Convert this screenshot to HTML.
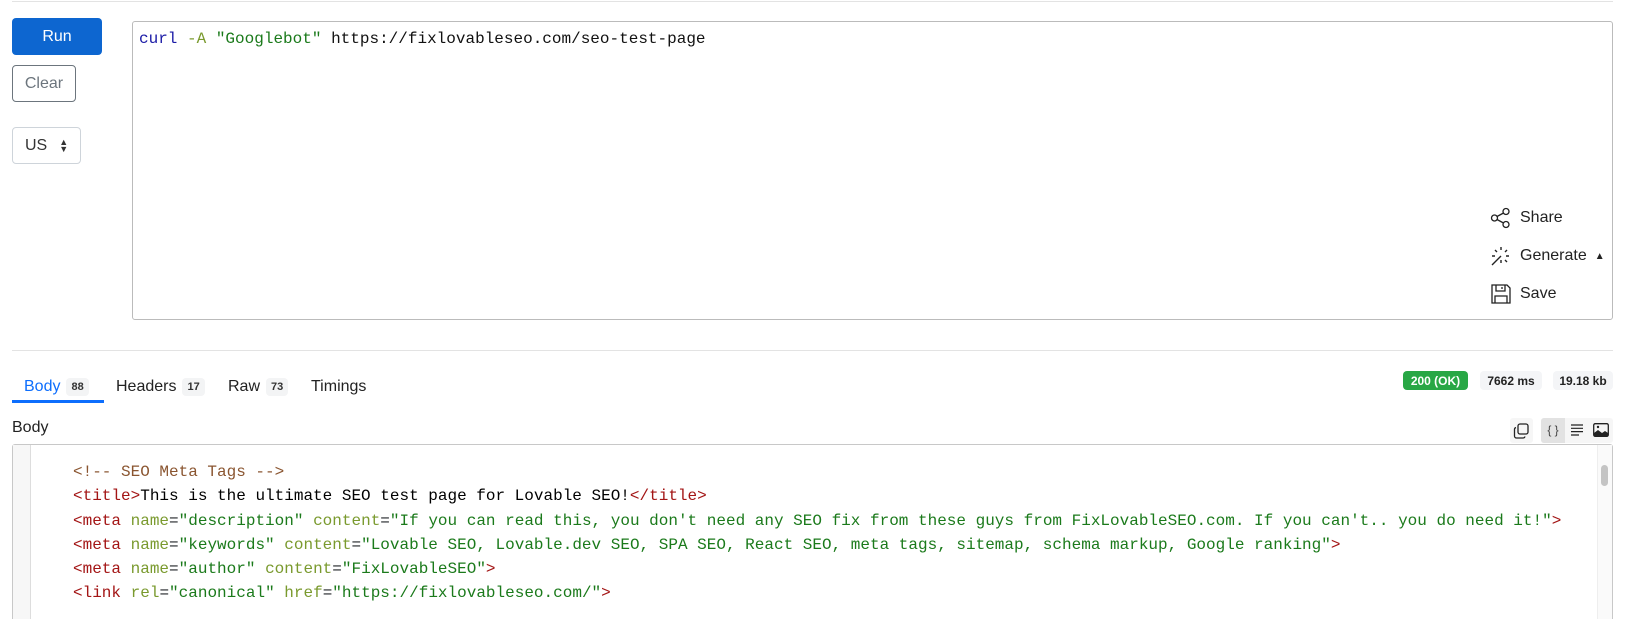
<!DOCTYPE html>
<html style="overflow:hidden;height:619px"><head><meta charset="utf-8"><style>
*{box-sizing:border-box;margin:0;padding:0}
body{width:1633px;height:619px;overflow:hidden;background:#fff;font-family:"Liberation Sans",sans-serif;color:#212529;position:relative}
.abs{position:absolute}
.hr{position:absolute;left:12px;width:1601px;height:2px;background:#e6e6e6}
.btn{position:absolute;border-radius:4px;font-size:16px;display:flex;align-items:center;justify-content:center}
.mono{font-family:"Liberation Mono",monospace;font-size:16px;white-space:pre}
.act{position:absolute;left:1490px;font-size:16px;display:flex;align-items:center;gap:8px;color:#222}
.tab{position:absolute;top:378px;font-size:16px;color:#222;display:flex;align-items:center;gap:6px}
.cnt{font-size:11px;font-weight:bold;background:#f3f4f5;border-radius:4px;padding:3px 5px;color:#333}
.badge{position:absolute;top:371px;height:19px;font-size:12px;font-weight:bold;border-radius:4px;display:flex;align-items:center;justify-content:center;background:#f4f5f7;color:#222}
.ln{position:absolute;left:73px;height:24px;line-height:24px}
.t{color:#a31515}.a{color:#7a9a2e}.s{color:#1b7a1b}.c{color:#8a5530}.k{color:#000}
</style></head><body>
<div class="hr" style="top:1px;height:1px;background:#e3e3e3"></div>
<div class="btn" style="left:12px;top:18px;width:90px;height:37px;background:#0d66d0;color:#fff">Run</div>
<div class="btn" style="left:12px;top:65px;width:64px;height:37px;border:1px solid #6c757d;color:#6c757d">Clear</div>
<div class="btn" style="left:12px;top:127px;width:69px;height:37px;border:1px solid #ced4da;color:#333;justify-content:flex-start;padding-left:12px">US<span style="font-size:9px;margin-left:12px;line-height:7px">▲<br>▼</span></div>
<div class="abs" style="left:132px;top:21px;width:1481px;height:299px;border:1px solid #bbb;border-radius:3px"></div>
<div class="abs mono" style="left:139px;top:29px;line-height:20px"><span style="color:#1a1aa6">curl</span> <span style="color:#7a9a2e">-A</span> <span style="color:#1b7a1b">"Googlebot"</span> <span style="color:#111">https://fixlovableseo.com/seo-test-page</span></div>
<div class="act" style="top:207px"><svg width="22" height="22" viewBox="0 0 22 22" fill="none" stroke="#222" stroke-width="1.3"><circle cx="4.5" cy="11" r="3"/><circle cx="16" cy="4.5" r="3"/><circle cx="16" cy="17.5" r="3"/><path d="M7 9.5l6.5-3.5M7 12.5l6.5 3.5"/></svg>Share</div>
<div class="act" style="top:245px"><svg width="22" height="22" viewBox="0 0 22 22" fill="none" stroke="#222" stroke-width="1.4"><path d="M2 20l9-9M11 2v3M11 15v3M2 11h3M16 11h3M5 5l2 2M15 15l2 2M17 5l-2 2"/></svg>Generate <span style="font-size:10px">▲</span></div>
<div class="act" style="top:283px"><svg width="22" height="22" viewBox="0 0 22 22" fill="none" stroke="#222" stroke-width="1.3"><path d="M2 2h15l3 3v15H2z"/><path d="M6 2v6h9V2M12 4v2M5 20v-7h12v7"/></svg>Save</div>
<div class="hr" style="top:350px;height:1px;background:#e3e3e3"></div>
<div class="tab" style="left:24px;color:#0d6efd">Body <span class="cnt">88</span></div>
<div class="tab" style="left:116px">Headers <span class="cnt">17</span></div>
<div class="tab" style="left:228px">Raw <span class="cnt">73</span></div>
<div class="tab" style="left:311px">Timings</div>
<div class="abs" style="left:12px;top:400px;width:92px;height:3px;background:#0d6efd"></div>
<div class="badge" style="left:1403px;width:65px;background:#28a745;color:#fff">200 (OK)</div>
<div class="badge" style="left:1480px;width:62px">7662 ms</div>
<div class="badge" style="left:1553px;width:60px">19.18 kb</div>
<div class="abs" style="left:12px;top:419px;font-size:16px;color:#222">Body</div>
<div class="abs" style="left:1510px;top:418px;width:23px;height:25px;background:#f6f6f6;border-radius:3px"></div>
<svg class="abs" style="left:1513px;top:423px" width="17" height="16" viewBox="0 0 17 16" fill="none" stroke="#222" stroke-width="1.3"><rect x="5" y="1" width="10" height="10" rx="2"/><path d="M3 4.5a2 2 0 0 0-1.5 2V13a2 2 0 0 0 2 2h6.5a2 2 0 0 0 2-1.5"/></svg>
<div class="abs" style="left:1541px;top:418px;width:72px;height:25px;background:#f6f6f6;border-radius:3px"></div>
<div class="abs" style="left:1541px;top:418px;width:24px;height:25px;background:#e2e2e2;border-radius:3px 0 0 3px;font-size:12px;text-align:center;line-height:25px;color:#444">{ }</div>
<svg class="abs" style="left:1570px;top:424px" width="14" height="12" viewBox="0 0 14 12" stroke="#222" stroke-width="1.2"><path d="M1 1h12M1 4.3h12M1 7.6h12M1 11h8"/></svg>
<svg class="abs" style="left:1593px;top:423px" width="16" height="14" viewBox="0 0 16 14"><rect x="0.7" y="0.7" width="14.6" height="12.6" rx="1.5" fill="none" stroke="#222" stroke-width="1.3"/><path d="M1 13V10l4-3 4 3 3-2 3 2v3z" fill="#222"/><circle cx="5" cy="4" r="1.2" fill="#222"/></svg>
<div class="abs" style="left:12px;top:444px;width:1601px;height:185px;border:1px solid #c8c8c8;border-radius:3px"></div>
<div class="abs" style="left:13px;top:445px;width:18px;height:180px;background:#f7f7f7;border-right:1px solid #ddd"></div>
<div class="abs" style="left:1597px;top:445px;width:15px;height:180px;background:#fafafa;border-left:1px solid #eee"></div>
<div class="abs" style="left:1601px;top:465px;width:7px;height:21px;background:#c4c4c4;border-radius:4px"></div>
<div class="ln mono c" style="top:460px">&lt;!-- SEO Meta Tags --&gt;</div>
<div class="ln mono" style="top:484px"><span class="t">&lt;title&gt;</span><span class="k">This is the ultimate SEO test page for Lovable SEO!</span><span class="t">&lt;/title&gt;</span></div>
<div class="ln mono" style="top:509px"><span class="t">&lt;meta</span> <span class="a">name</span>=<span class="s">"description"</span> <span class="a">content</span>=<span class="s">"If you can read this, you don't need any SEO fix from these guys from FixLovableSEO.com. If you can't.. you do need it!"</span><span class="t">&gt;</span></div>
<div class="ln mono" style="top:533px"><span class="t">&lt;meta</span> <span class="a">name</span>=<span class="s">"keywords"</span> <span class="a">content</span>=<span class="s">"Lovable SEO, Lovable.dev SEO, SPA SEO, React SEO, meta tags, sitemap, schema markup, Google ranking"</span><span class="t">&gt;</span></div>
<div class="ln mono" style="top:557px"><span class="t">&lt;meta</span> <span class="a">name</span>=<span class="s">"author"</span> <span class="a">content</span>=<span class="s">"FixLovableSEO"</span><span class="t">&gt;</span></div>
<div class="ln mono" style="top:581px"><span class="t">&lt;link</span> <span class="a">rel</span>=<span class="s">"canonical"</span> <span class="a">href</span>=<span class="s">"https://fixlovableseo.com/"</span><span class="t">&gt;</span></div>
</body></html>
